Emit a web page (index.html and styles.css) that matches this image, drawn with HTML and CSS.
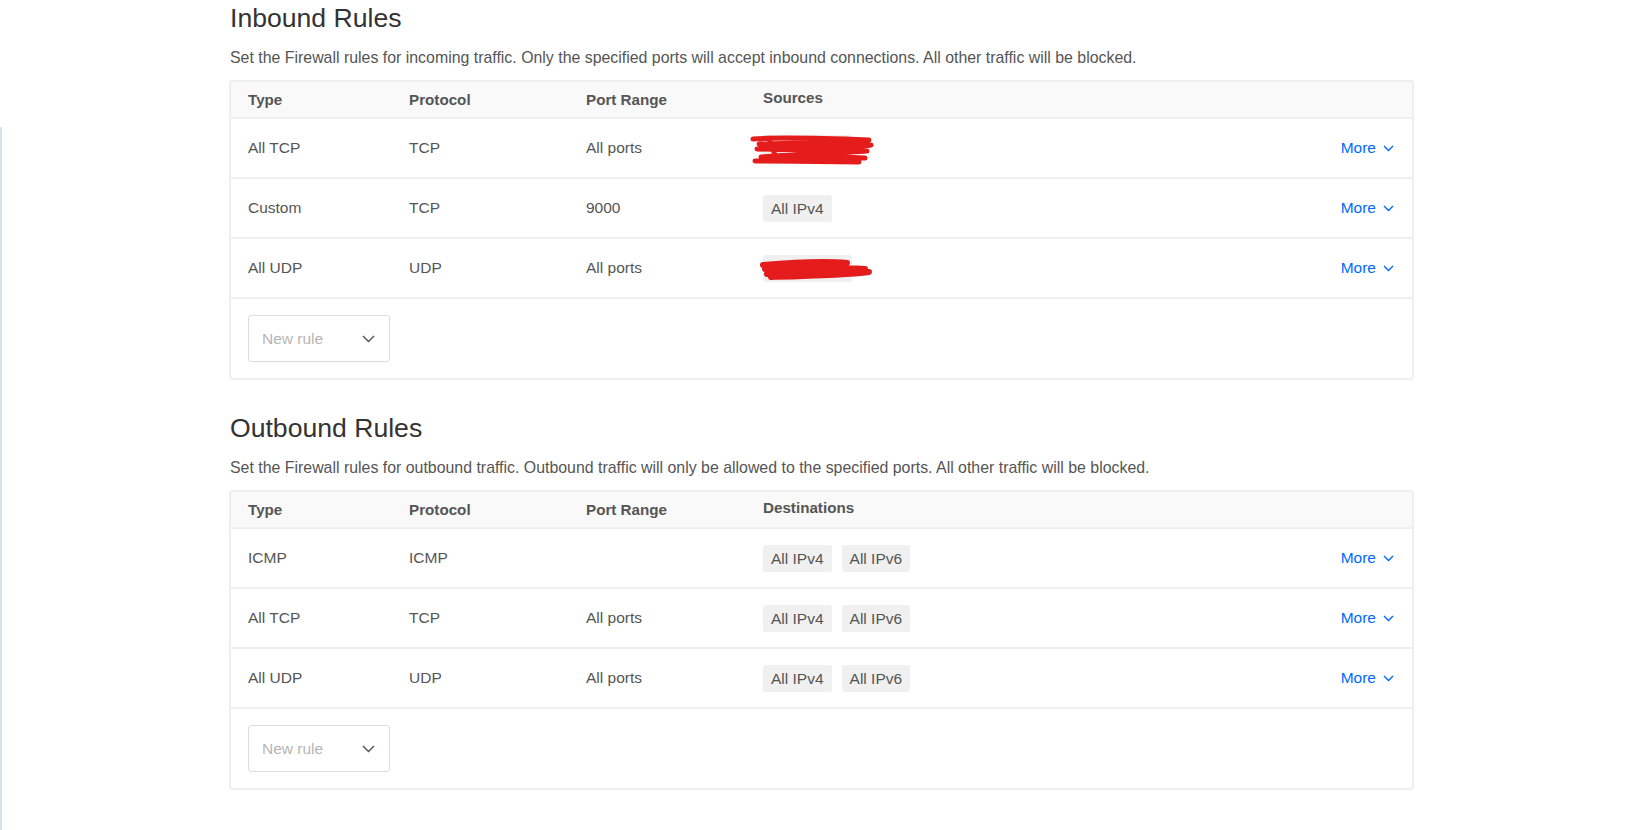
FILE: index.html
```html
<!DOCTYPE html>
<html>
<head>
<meta charset="utf-8">
<link rel="stylesheet" href="styles.css">
</head>
<body>
<div class="page">
  <div class="edge"></div>
  <main class="main">
    <section class="section">
      <h2 class="title">Inbound Rules</h2>
      <p class="desc">Set the Firewall rules for incoming traffic. Only the specified ports will accept inbound connections. All other traffic will be blocked.</p>
      <div class="table">
        <div class="row head">
          <div class="c c1">Type</div>
          <div class="c c2">Protocol</div>
          <div class="c c3">Port Range</div>
          <div class="c c4 raised">Sources</div>
        </div>
        <div class="row">
          <div class="c c1">All TCP</div>
          <div class="c c2">TCP</div>
          <div class="c c3">All ports</div>
          <div class="c c4"><span class="chip redacted wide"><svg class="scribble" viewBox="0 0 128 30" width="128" height="30"><path d="M4 4 C30 2 70 3 120 5 C100 7 60 8 10 9 C40 10 90 10 122 10 C110 12 60 14 8 14 C50 15 100 15 118 16 C90 18 50 19 12 22 C40 22 80 21 116 23 M20 3 L28 26 M6 26 C40 26 80 27 110 27" fill="none" stroke="#e51c1c" stroke-width="5" stroke-linecap="round" stroke-linejoin="round"/></svg></span></div>
          <div class="c c5"><a class="more">More <svg width="11" height="7" viewBox="0 0 11 7"><path d="M1 1 L5.5 5.5 L10 1" fill="none" stroke="#0069ff" stroke-width="1.4"/></svg></a></div>
        </div>
        <div class="row">
          <div class="c c1">Custom</div>
          <div class="c c2">TCP</div>
          <div class="c c3">9000</div>
          <div class="c c4"><span class="chip">All IPv4</span></div>
          <div class="c c5"><a class="more">More <svg width="11" height="7" viewBox="0 0 11 7"><path d="M1 1 L5.5 5.5 L10 1" fill="none" stroke="#0069ff" stroke-width="1.4"/></svg></a></div>
        </div>
        <div class="row">
          <div class="c c1">All UDP</div>
          <div class="c c2">UDP</div>
          <div class="c c3">All ports</div>
          <div class="c c4"><span class="chip redacted wide"><svg class="scribble s2" viewBox="0 0 118 24" width="118" height="24"><path d="M6 8 C40 5 70 4 90 6 C60 8 30 9 8 12 C40 11 80 10 108 12 C80 14 40 15 10 17 C50 17 90 16 112 15 C90 18 50 19 14 20" fill="none" stroke="#e51c1c" stroke-width="6" stroke-linecap="round" stroke-linejoin="round"/></svg></span></div>
          <div class="c c5"><a class="more">More <svg width="11" height="7" viewBox="0 0 11 7"><path d="M1 1 L5.5 5.5 L10 1" fill="none" stroke="#0069ff" stroke-width="1.4"/></svg></a></div>
        </div>
        <div class="foot">
          <div class="select"><span>New rule</span><svg width="13" height="8" viewBox="0 0 13 8"><path d="M1 1 L6.5 6.5 L12 1" fill="none" stroke="#4a4f5a" stroke-width="1.4"/></svg></div>
        </div>
      </div>
    </section>

    <section class="section">
      <h2 class="title">Outbound Rules</h2>
      <p class="desc">Set the Firewall rules for outbound traffic. Outbound traffic will only be allowed to the specified ports. All other traffic will be blocked.</p>
      <div class="table">
        <div class="row head">
          <div class="c c1">Type</div>
          <div class="c c2">Protocol</div>
          <div class="c c3">Port Range</div>
          <div class="c c4 raised">Destinations</div>
        </div>
        <div class="row">
          <div class="c c1">ICMP</div>
          <div class="c c2">ICMP</div>
          <div class="c c3"></div>
          <div class="c c4"><span class="chip">All IPv4</span><span class="chip">All IPv6</span></div>
          <div class="c c5"><a class="more">More <svg width="11" height="7" viewBox="0 0 11 7"><path d="M1 1 L5.5 5.5 L10 1" fill="none" stroke="#0069ff" stroke-width="1.4"/></svg></a></div>
        </div>
        <div class="row">
          <div class="c c1">All TCP</div>
          <div class="c c2">TCP</div>
          <div class="c c3">All ports</div>
          <div class="c c4"><span class="chip">All IPv4</span><span class="chip">All IPv6</span></div>
          <div class="c c5"><a class="more">More <svg width="11" height="7" viewBox="0 0 11 7"><path d="M1 1 L5.5 5.5 L10 1" fill="none" stroke="#0069ff" stroke-width="1.4"/></svg></a></div>
        </div>
        <div class="row">
          <div class="c c1">All UDP</div>
          <div class="c c2">UDP</div>
          <div class="c c3">All ports</div>
          <div class="c c4"><span class="chip">All IPv4</span><span class="chip">All IPv6</span></div>
          <div class="c c5"><a class="more">More <svg width="11" height="7" viewBox="0 0 11 7"><path d="M1 1 L5.5 5.5 L10 1" fill="none" stroke="#0069ff" stroke-width="1.4"/></svg></a></div>
        </div>
        <div class="foot">
          <div class="select"><span>New rule</span><svg width="13" height="8" viewBox="0 0 13 8"><path d="M1 1 L6.5 6.5 L12 1" fill="none" stroke="#4a4f5a" stroke-width="1.4"/></svg></div>
        </div>
      </div>
    </section>
  </main>
</div>
</body>
</html>
```
FILE: styles.css
```css
* { box-sizing: border-box; }
html, body { margin: 0; padding: 0; background: #fff; }
body {
  font-family: "Liberation Sans", Arial, sans-serif;
  color: #555;
  height: 830px;
  overflow: hidden;
}
.page {
  display: flex;
  height: 830px;
}
.edge {
  width: 2px;
  margin-top: 127px;
  background: #d9e1ea;
  flex: none;
}
.main {
  margin-left: 227px;
  width: 1185px;
  padding-top: 3px;
  display: flex;
  flex-direction: column;
}
.section {
  margin-bottom: 33px;
}
.title {
  margin: 0 0 0 1px;
  font-size: 26.6px;
  line-height: 30px;
  font-weight: normal;
  color: #333;
}
.desc {
  margin: 15px 0 12px 1px;
  font-size: 15.9px;
  line-height: 20px;
  color: #555;
}
.table {
  border: 2px solid #efefef;
  border-radius: 4px;
}
.row {
  display: grid;
  grid-template-columns: 161px 177px 177px 1fr auto;
  align-items: center;
  height: 60px;
  padding: 0 18px 0 17px;
  border-bottom: 2px solid #efefef;
  font-size: 15.5px;
}
.row.head {
  height: 37px;
  background: #f9f9f9;
  font-weight: bold;
  color: #555;
  font-size: 15.2px;
  border-radius: 3px 3px 0 0;
}
.raised { padding-bottom: 4px; }
.c4 { display: flex; gap: 10px; align-items: center; }
.chip {
  display: inline-block;
  background: #f0f0f0;
  border-radius: 3px;
  height: 27px;
  line-height: 27px;
  padding: 0 8px;
  color: #555;
}
.chip.wide { width: 89px; position: relative; }
.scribble {
  position: absolute;
  left: -14px;
  top: 0px;
}
.scribble.s2 {
  left: -6px;
  top: 2px;
}
.more {
  color: #0069ff;
  display: flex;
  align-items: center;
  gap: 7px;
  cursor: pointer;
}
.foot {
  padding: 16px 17px 16px;
}
.select {
  width: 142px;
  height: 47px;
  border: 1px solid #ddd;
  border-radius: 3px;
  display: flex;
  align-items: center;
  justify-content: space-between;
  padding: 0 14px 0 13px;
  font-size: 15.5px;
  color: #b5b5b5;
}
```
